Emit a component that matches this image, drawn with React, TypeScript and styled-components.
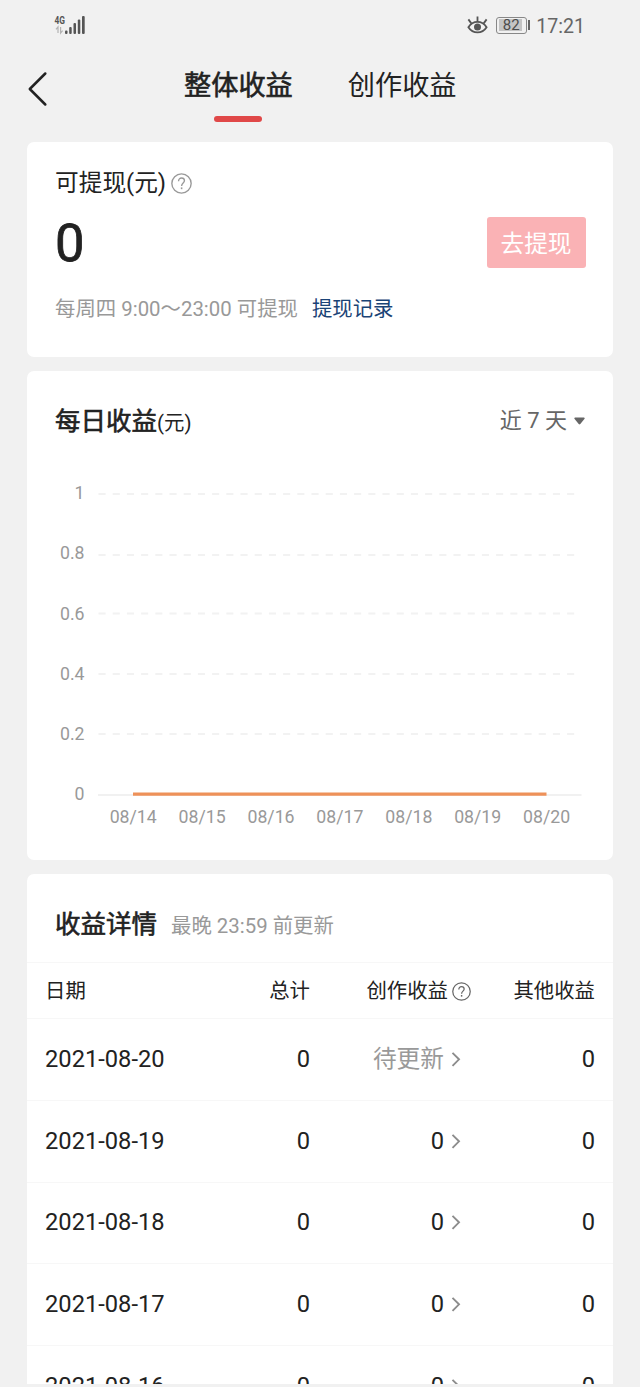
import React from 'react';
import styled, { createGlobalStyle } from 'styled-components';

const GlobalStyle = createGlobalStyle`
  * { box-sizing: border-box; }
  html, body { margin: 0; padding: 0; background: #f1f1f1; }
  body {
    font-family: Roboto, "Noto Sans CJK SC", sans-serif;
    color: #222;
  }
`;

const Page = styled.div`
  width: 640px;
  height: 1384px;
  margin-bottom: 3px;
  overflow: hidden;
  display: flex;
  flex-direction: column;
  background: #f1f1f1;
`;

const StatusBar = styled.header`
  height: 50px;
  flex: none;
  display: flex;
  align-items: center;
  justify-content: space-between;
  padding: 0 55px 0 54px;
`;

const StatusGroup = styled.div`
  display: flex;
  align-items: center;
`;

const Battery = styled.div`
  display: flex;
  align-items: center;
  margin: 0 6px 0 8px;
`;

const BatteryCell = styled.div`
  width: 31px;
  height: 17px;
  padding: 1.5px;
  border: 1px solid #888;
  border-radius: 3px;
`;

const BatteryLevel = styled.div`
  width: 23px;
  height: 12px;
  margin-left: 1px;
  background: #c4c4c4;
  color: #4c4c4c;
  font-size: 15px;
  line-height: 13px;
  padding-left: 3.5px;
`;

const BatteryTip = styled.div`
  width: 2px;
  height: 10px;
  margin-left: 1.5px;
  background: #666;
`;

const Clock = styled.span`
  padding-top: 3px;
  font-size: 19.6px;
  line-height: 24px;
  color: #666;
`;

const NavBar = styled.nav`
  height: 92px;
  flex: none;
  display: flex;
  align-items: flex-start;
  padding-left: 27px;
`;

const BackButton = styled.button`
  border: 0;
  background: none;
  padding: 20px 0 0;
  width: 157px;
  text-align: left;
`;

const Tabs = styled.div`
  display: flex;
  gap: 55px;
  padding-top: 18px;
`;

const Tab = styled.div<{ $active?: boolean }>`
  display: flex;
  flex-direction: column;
  align-items: center;
  font-size: 27.2px;
  line-height: 36px;
  -webkit-text-stroke: ${(p) => (p.$active ? '0.6px #222' : '0')};
`;

const TabMarker = styled.span`
  width: 48px;
  height: 6px;
  margin-top: 12px;
  margin-right: 1px;
  border-radius: 3px;
  background: #e04848;
`;

const Card = styled.section<{ $height?: number }>`
  flex: none;
  width: 586px;
  height: ${(p) => (p.$height ? `${p.$height}px` : 'auto')};
  margin: 0 0 14px 27px;
  border-radius: 7px;
  background: #fff;
`;

const BalanceCard = styled(Card)`
  padding: 24px 27.5px 0 28px;
`;

const BalanceLabel = styled.div`
  display: flex;
  align-items: center;
  gap: 5px;
  height: 34px;
  font-size: 23.7px;
  line-height: 34px;
`;

const BalanceRow = styled.div`
  display: flex;
  justify-content: space-between;
  align-items: center;
  height: 51px;
  margin-top: 17px;
`;

const BalanceValue = styled.div`
  font-size: 52.5px;
  line-height: 54px;
  -webkit-text-stroke: 0.8px #222;
`;

const WithdrawButton = styled.button`
  width: 99px;
  height: 51px;
  border: 0;
  border-radius: 3px;
  padding: 0 0 1px;
  background: #fab2b5;
  color: #fff;
  font: inherit;
  font-size: 23.7px;
`;

const BalanceNote = styled.div`
  display: flex;
  gap: 14px;
  margin-top: 26px;
  font-size: 20.4px;
  line-height: 30px;
  color: #999;
`;

const RecordLink = styled.a`
  color: #1a4376;
`;

const CardHeading = styled.div`
  display: flex;
  align-items: center;
  justify-content: space-between;
  height: 100px;
  padding: 1px 28px 0;
`;

const Title = styled.h2`
  margin: 0;
  font-size: 25.5px;
  line-height: 36px;
  font-weight: 400;
  -webkit-text-stroke: 0.6px #222;
`;

const Unit = styled.span`
  font-size: 20.4px;
  -webkit-text-stroke: 0;
`;

const RangePicker = styled.div`
  display: flex;
  align-items: center;
  gap: 7px;
  padding-bottom: 1px;
  font-size: 22px;
  line-height: 32px;
  color: #666;
`;

const Chart = styled.svg`
  display: block;
  font-size: 17.7px;
  fill: #999;
`;

const DetailHeading = styled.div`
  display: flex;
  align-items: baseline;
  gap: 14px;
  height: 88px;
  padding: 32px 28px 0;
`;

const DetailNote = styled.span`
  font-size: 20.4px;
  color: #999;
`;

const TableRow = styled.div<{ $head?: boolean }>`
  display: grid;
  grid-template-columns: 150px 115px 161px 124px;
  align-items: center;
  height: ${(p) => (p.$head ? 56 : 81.8)}px;
  padding: ${(p) => (p.$head ? '1px 18px 0' : '0 18px 1.4px')};
  border-top: 1px solid #f7f7f7;
  font-size: ${(p) => (p.$head ? 20.4 : 23.7)}px;
  line-height: 30px;
`;

const Cell = styled.div<{ $muted?: boolean; $inset?: number }>`
  display: flex;
  align-items: center;
  justify-content: flex-end;
  gap: ${(p) => (p.$inset ? 7 : 4)}px;
  padding-right: ${(p) => p.$inset ?? 0}px;
  color: ${(p) => (p.$muted ? '#999' : '#222')};
`;

const DateCell = styled.div``;

const HelpIcon = ({ size, color }: { size: number; color: string }) => (
  <svg width={size} height={size} viewBox="0 0 20 20" fill="none" stroke={color} strokeWidth="1.3">
    <circle cx="10" cy="10" r="9.2" />
    <path d="M7.2 7.8C7.2 5.9 8.4 4.8 10 4.8s2.8 1.1 2.8 2.6c0 2.1-2.7 2.3-2.7 4.9" />
    <path d="M10.1 13.7v1.7" strokeWidth="1.5" />
  </svg>
);

const Chevron = () => (
  <svg width="10" height="16" viewBox="0 0 10 16" fill="none" stroke="#8c8c8c" strokeWidth="1.9">
    <path d="M1.5 1.8L8 8.3 1.5 14.8" />
  </svg>
);

const SignalIcon = () => (
  <svg width="32" height="20" viewBox="0 0 32 20" fill="#555" overflow="visible">
    <text x="0.5" y="9.2" fontSize="11.5" fontWeight="700" textLength="10.5" lengthAdjust="spacingAndGlyphs">4G</text>
    <path d="M4 18v-6L2 14.4M6.6 12v6l2-2.4" fill="none" stroke="#b4b4b4" strokeWidth="1.2" />
    <rect x="11" y="15.5" width="2.5" height="3.5" rx="1" />
    <rect x="15.2" y="12" width="2.5" height="7" rx="1" />
    <rect x="19.5" y="8" width="2.5" height="11" rx="1" />
    <rect x="23.8" y="4.5" width="2.5" height="14.5" rx="1" />
    <rect x="28" y="1" width="2.7" height="18" rx="1" />
  </svg>
);

const EyeIcon = () => (
  <svg width="21" height="20" viewBox="0 0 21 20" fill="none" stroke="#555" strokeWidth="1.8">
    <path d="M1.4 12.2C3.6 8.7 6.8 6.9 10.5 6.9s6.9 1.8 9.1 5.3c-2.2 3.4-5.4 5.2-9.1 5.2s-6.9-1.8-9.1-5.2z" />
    <circle cx="10.5" cy="12.1" r="3.5" fill="#555" stroke="none" />
    <path d="M10.5 6.5V1.4M4.3 8.4L1.4 4.4M16.7 8.4l2.9-4" />
  </svg>
);

const gridLines = [
  { label: '1', y: 23 },
  { label: '0.8', y: 84 },
  { label: '0.6', y: 142.5 },
  { label: '0.4', y: 203 },
  { label: '0.2', y: 263 },
];

const days = ['08/14', '08/15', '08/16', '08/17', '08/18', '08/19', '08/20'];

const rows = [
  { date: '2021-08-20', pending: true },
  { date: '2021-08-19' },
  { date: '2021-08-18' },
  { date: '2021-08-17' },
  { date: '2021-08-16' },
];

const DailyChart = () => (
  <Chart width="586" height="370" viewBox="0 0 586 370">
    {gridLines.map((line, i) => (
      <g key={line.label}>
        <text x="57.5" y={28.3 + i * 60.1} textAnchor="end">{line.label}</text>
        <path d={`M71.5 ${line.y}H549`} stroke="#f2f2f2" strokeWidth="1.8" strokeDasharray="7.1 7.1" />
      </g>
    ))}
    <text x="57.5" y="328.8" textAnchor="end">0</text>
    <path d="M71 323.9H554.5" stroke="#ededed" strokeWidth="1.5" />
    <path d="M106 323.2H519.5" stroke="#ee9159" strokeWidth="3.2" />
    {days.map((day, i) => (
      <text key={day} x={106.2 + i * 68.9} y="352" textAnchor="middle">{day}</text>
    ))}
  </Chart>
);

export default function App() {
  return (
    <Page>
      <GlobalStyle />
      <StatusBar>
        <SignalIcon />
        <StatusGroup>
          <EyeIcon />
          <Battery>
            <BatteryCell>
              <BatteryLevel>82</BatteryLevel>
            </BatteryCell>
            <BatteryTip />
          </Battery>
          <Clock>17:21</Clock>
        </StatusGroup>
      </StatusBar>
      <NavBar>
        <BackButton aria-label="返回">
          <svg width="22" height="37" viewBox="0 0 22 37" fill="none" stroke="#222" strokeWidth="2.5" strokeLinecap="round" strokeLinejoin="round">
            <path d="M18.3 3.5L2.8 19l15.5 15.5" />
          </svg>
        </BackButton>
        <Tabs>
          <Tab $active>
            整体收益
            <TabMarker />
          </Tab>
          <Tab>创作收益</Tab>
        </Tabs>
      </NavBar>

      <BalanceCard $height={215}>
        <BalanceLabel>
          <span>可提现(元)</span>
          <HelpIcon size={21} color="#999" />
        </BalanceLabel>
        <BalanceRow>
          <BalanceValue>0</BalanceValue>
          <WithdrawButton>去提现</WithdrawButton>
        </BalanceRow>
        <BalanceNote>
          <span>每周四 9:00～23:00 可提现</span>
          <RecordLink>提现记录</RecordLink>
        </BalanceNote>
      </BalanceCard>

      <Card $height={489}>
        <CardHeading>
          <Title>
            每日收益<Unit>(元)</Unit>
          </Title>
          <RangePicker>
            近 7 天
            <svg width="11" height="8" viewBox="0 0 11 8" fill="#666">
              <path d="M1 0.5h9q1 .3.6 1.3L6.3 7q-.8.9-1.6 0L.4 1.8Q0 .8 1 .5z" />
            </svg>
          </RangePicker>
        </CardHeading>
        <DailyChart />
      </Card>

      <Card>
        <DetailHeading>
          <Title>收益详情</Title>
          <DetailNote>最晚 23:59 前更新</DetailNote>
        </DetailHeading>
        <TableRow $head>
          <DateCell>日期</DateCell>
          <Cell>总计</Cell>
          <Cell>
            创作收益
            <HelpIcon size={19} color="#666" />
          </Cell>
          <Cell>其他收益</Cell>
        </TableRow>
        {rows.map((row) => (
          <TableRow key={row.date}>
            <DateCell>{row.date}</DateCell>
            <Cell>0</Cell>
            <Cell $muted={row.pending} $inset={10}>
              {row.pending ? '待更新' : '0'}
              <Chevron />
            </Cell>
            <Cell>0</Cell>
          </TableRow>
        ))}
      </Card>
    </Page>
  );
}
